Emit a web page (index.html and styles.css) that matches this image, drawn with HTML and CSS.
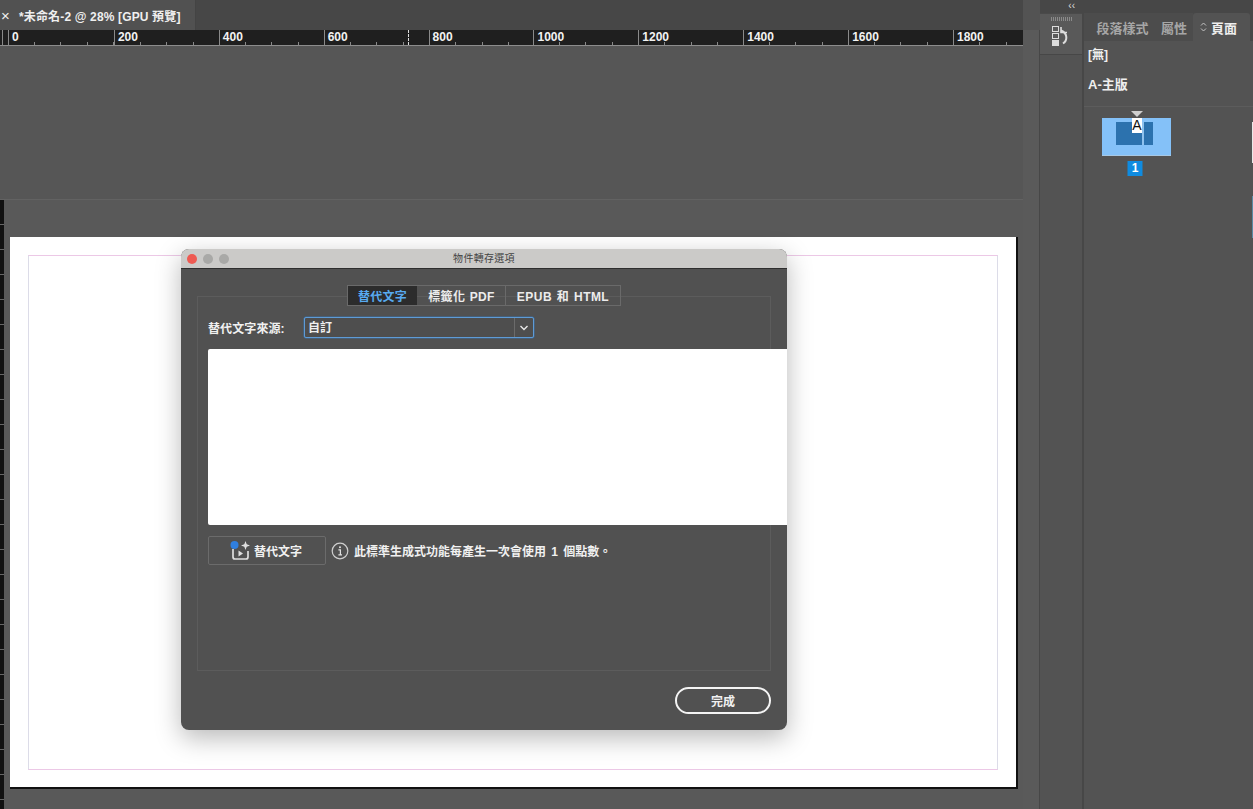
FILE: index.html
```html
<!DOCTYPE html>
<html lang="zh-Hant">
<head>
<meta charset="utf-8">
<title>物件轉存選項</title>
<link rel="stylesheet" href="styles.css">
</head>
<body>
<div class="app">
  <main class="workspace">
    <div class="tabbar">
      <div class="doc-tab"><span class="doc-close">×</span><span class="doc-name">*未命名-2 @ 28% [GPU 預覽]</span></div>
    </div>
    <div class="ruler-row">
      <div class="ruler">
        <span class="ruler-start"></span>
        <span class="cell">0</span><span class="cell">200</span><span class="cell">400</span><span class="cell">600</span><span class="cell">800</span><span class="cell">1000</span><span class="cell">1200</span><span class="cell">1400</span><span class="cell">1600</span><span class="cell last">1800</span>
      </div>
      <span class="ruler-cursor"></span>
    </div>
    <div class="canvas">
      <div class="pasteboard-top"></div>
      <div class="spread">
        <div class="v-ruler"></div>
        <div class="page-area">
          <div class="page"><div class="guide"></div></div>
        </div>
      </div>
      <section class="dialog">
        <header class="titlebar">
          <span class="light red"></span><span class="light"></span><span class="light"></span>
          <span class="title">物件轉存選項</span>
        </header>
        <div class="dialog-body">
          <div class="group">
            <div class="tabs">
              <span class="tab active">替代文字</span><span class="tab t2">標籤化 PDF</span><span class="tab t3">EPUB 和 HTML</span>
            </div>
            <div class="source-row">
              <label class="source-label">替代文字來源:</label>
              <div class="select"><span class="select-value">自訂</span><span class="select-arrow"><svg width="10" height="6" viewBox="0 0 10 6"><path d="M1.5 1l3.5 3.5L8.5 1" fill="none" stroke="#e8e8e8" stroke-width="1.4"/></svg></span></div>
            </div>
            <div class="textbox"></div>
            <div class="gen-row">
              <button class="gen-btn">
                <svg class="gen-icon" width="22" height="22" viewBox="0 0 22 22"><path d="M3 9v8a2 2 0 0 0 2 2h11a2 2 0 0 0 2-2V11" fill="none" stroke="#dedede" stroke-width="1.7"/><path d="M8.5 10.5l4.5 3-4.5 3z" fill="#dedede"/><path d="M15.5 1l1.2 3.3L20 5.5l-3.3 1.2L15.5 10l-1.2-3.3L11 5.5l3.3-1.2z" fill="#dedede"/><circle cx="4.5" cy="5" r="4" fill="#2f7fe0"/></svg>
                <span>替代文字</span>
              </button>
              <svg class="info" width="18" height="18" viewBox="0 0 18 18"><circle cx="9" cy="9" r="7.8" fill="none" stroke="#cfcfcf" stroke-width="1.2"/><circle cx="9" cy="5.3" r="1" fill="#e0e0e0"/><path d="M7.4 7.8H9.4V12.6M7.4 12.8H11" fill="none" stroke="#e0e0e0" stroke-width="1.2"/></svg>
              <span class="gen-note">此標準生成式功能每產生一次會使用 1 個點數。</span>
            </div>
          </div>
          <div class="actions"><button class="done">完成</button></div>
        </div>
      </section>
    </div>
  </main>
  <div class="scroll-strip"></div>
  <aside class="dock">
    <div class="collapse">‹‹</div>
    <div class="dock-tool">
      <div class="grip"></div>
      <svg width="18" height="20" viewBox="0 0 18 20"><rect x="0.5" y="0.5" width="6" height="5" fill="none" stroke="#dcdcdc"/><rect x="0.5" y="7.5" width="6" height="5" fill="none" stroke="#dcdcdc"/><rect x="0" y="14" width="7" height="6" fill="#dcdcdc"/><path d="M11 17.5c4.5-3 5-10-2-13" fill="none" stroke="#dcdcdc" stroke-width="2"/><path d="M9 1v5.5h6" fill="none" stroke="#dcdcdc" stroke-width="1.6"/></svg>
    </div>
  </aside>
  <aside class="panel">
    <div class="panel-tabs">
      <span class="ptab">段落樣式</span><span class="ptab">屬性</span><span class="ptab current"><svg class="updown" width="7" height="10" viewBox="0 0 7 10"><path d="M1 3.5L3.5 1 6 3.5M1 6.5L3.5 9 6 6.5" fill="none" stroke="#c4c4c4"/></svg>頁面</span>
    </div>
    <div class="master-list">
      <div class="master">[無]</div>
      <div class="master second">A-主版</div>
    </div>
    <div class="pages">
      <div class="marker"></div>
      <div class="thumb"><div class="thumb-inner"><span class="thumb-a">A</span><span class="thumb-stripe"></span></div></div>
      <div class="page-no">1</div>
    </div>
    <div class="edge-mark"></div>
    <div class="edge-mark blue"></div>
  </aside>
</div>
</body>
</html>
```
FILE: styles.css
```css
* { box-sizing: border-box; }
html, body { margin: 0; height: 100%; }
body {
  width: 1253px; height: 809px; overflow: hidden; background: #535353; color: #f0f0f0;
  font-family: "Liberation Sans", "Noto Sans CJK TC", sans-serif;
}
.app { display: flex; width: 1253px; height: 809px; }

.workspace { width: 1023px; display: flex; flex-direction: column; position: relative; flex: none; }
.tabbar { height: 30px; background: #474747; flex: none; }
.doc-tab { width: 196px; height: 30px; background: #515151; display: flex; align-items: center; border-right: 1px solid #444; font-size: 12px; font-weight: 700; color: #efefef; }
.doc-close { width: 19px; padding-left: 1px; font-size: 15px; font-weight: 400; }
.doc-name { white-space: nowrap; letter-spacing: 0.15px; }

.ruler-row { height: 16px; flex: none; position: relative; }
.ruler {
  height: 16px; display: flex; background-color: #1f1f1f; border-bottom: 1px solid #8d8d8d;
}
.ruler-start { width: 9px; border-right: 1px solid #8a8a8a; flex: none; background: linear-gradient(90deg, transparent 2px, #8a8a8a 2px 3px, transparent 3px); }
.cell {
  width: 104.9px; flex: none; padding: 1px 0 0 3px; font-size: 12px; line-height: 13px; font-weight: 700; color: #f2f2f2;
  border-left: 1px solid #8a8a8a;
  background-image: repeating-linear-gradient(90deg, transparent 0 25.25px, #8a8a8a 25.25px 26.25px);
  background-size: 100% 3px; background-position: 0 100%; background-repeat: no-repeat;
}
.ruler-start + .cell { border-left: 0; }
.cell.last { width: 69px; }
.ruler-cursor { position: absolute; left: 408px; top: 0; height: 15px; border-left: 1px dashed #ddd; }

.canvas { flex: 1; position: relative; background: #575757; display: flex; flex-direction: column; }
.pasteboard-top { height: 154px; flex: none; background: #565656; border-bottom: 1px solid #626262; }
.spread { flex: 1; display: flex; background: #595959; }
.v-ruler {
  width: 4px; flex: none; margin-right: 6px;
  background: repeating-linear-gradient(180deg, #111 0 24px, #666 24px 25px);
}
.page-area { padding-top: 37px; }
.page {
  width: 1008px; height: 552px; background: #fff; padding: 18px 18px 17px 18px;
  border-right: 2px solid #111; border-bottom: 2px solid #111;
}
.guide { width: 970px; height: 515px; border: 1px solid #ecc8e6; border-left-color: #dcdce8; border-right-color: #dcdce8; }

.dialog {
  position: absolute; left: 181px; top: 203px; width: 606px; height: 481px; background: #515151;
  border-radius: 8px; overflow: hidden; box-shadow: 0 8px 26px rgba(0,0,0,.28); display: flex; flex-direction: column;
}
.titlebar { height: 20px; flex: none; background: #cbcac8; border-bottom: 1px solid #2e2e2e; display: flex; align-items: center; padding-left: 6px; gap: 6px; position: relative; }
.light { width: 10px; height: 10px; border-radius: 50%; background: #a9a9a7; }
.light.red { background: #ee5a52; }
.title { position: absolute; left: 0; right: 0; text-align: center; color: #444; font-size: 10px; line-height: 20px; letter-spacing: .3px; }
.dialog-body { flex: 1; padding: 27px 16px 0 16px; display: flex; flex-direction: column; }
.group { height: 375px; border: 1px solid #5c5c5c; padding: 0 0 0 10px; position: relative; overflow: visible; }
.tabs { position: absolute; top: -12px; left: 149px; display: flex; height: 21px; border: 1px solid #6a6a6a; font-size: 12px; font-weight: 700; }
.tab { display: flex; align-items: center; justify-content: center; color: #ececec; letter-spacing: .3px; width: 69px; white-space: nowrap; }
.tab.active { background: #2c2c2c; color: #58aaf0; }
.tab.t2 { width: 89px; border-right: 1px solid #6a6a6a; word-spacing: 1px; padding-left: 1px; }
.tab.t3 { width: 114px; letter-spacing: .45px; word-spacing: 1px; }
.source-row { display: flex; align-items: center; padding-top: 20px; height: 41px; }
.source-label { width: 96px; flex: none; font-size: 12px; font-weight: 700; white-space: nowrap; letter-spacing: .1px; }
.select { width: 230px; height: 21px; border: 1px solid #5e9bd6; border-radius: 2px; display: flex; background: #4e4e4e; font-size: 12px; font-weight: 700; box-shadow: 0 0 0 .5px #3d6f9f; }
.select-value { flex: 1; line-height: 20px; padding-left: 3px; }
.select-arrow { width: 19px; border-left: 1px solid #6b6b6b; display: flex; align-items: center; justify-content: center; }
.textbox { width: 590px; height: 176px; background: #fff; margin-top: 11px; border-radius: 2px 0 0 2px; }
.gen-row { display: flex; align-items: center; margin-top: 11px; height: 29px; }
.gen-btn { width: 118px; height: 29px; background: transparent; border: 1px solid #6b6b6b; border-radius: 2px; color: #f0f0f0; font: 700 12px "Liberation Sans", "Noto Sans CJK TC", sans-serif; display: flex; align-items: center; padding: 0 0 0 21px; gap: 2px; }
.gen-icon { flex: none; }
.info { margin-left: 5px; flex: none; }
.gen-note { margin-left: 5px; font-size: 12px; font-weight: 700; white-space: nowrap; word-spacing: 2px; }
.actions { display: flex; justify-content: flex-end; padding-top: 16px; }
.done { width: 96px; height: 27px; border: 2px solid #f4f4f4; border-radius: 14px; background: transparent; color: #f0f0f0; font: 700 12px "Liberation Sans", "Noto Sans CJK TC", sans-serif; padding: 0; }

.scroll-strip { width: 17px; flex: none; background: #5a5a5a; margin-top: 30px; border-right: 1px solid #474747; }
.dock { width: 44px; flex: none; background: #535353; border-right: 2px solid #474747; display: flex; flex-direction: column; }
.collapse { height: 13px; background: #474747; font-size: 10px; line-height: 11px; text-align: right; padding-right: 7px; color: #ddd; }
.dock-tool { height: 42px; background: #595959; border-top: 1px solid #4a4a4a; border-bottom: 1px solid #474747; display: flex; flex-direction: column; align-items: center; padding-top: 3px; gap: 5px; }
.grip { width: 21px; height: 4px; background: repeating-linear-gradient(90deg, #8a8a8a 0 1px, transparent 1px 2px); }

.panel { flex: 1; background: #535353; position: relative; min-width: 0; }
.panel-tabs { height: 41px; background: #474747; display: flex; padding-top: 13px; font-size: 13px; font-weight: 700; }
.ptab { display: flex; align-items: center; justify-content: center; color: #a6a6a6; white-space: nowrap; background: #4c4c4c; }
.ptab:nth-child(1) { width: 70px; padding-left: 7px; }
.ptab:nth-child(2) { width: 39px; justify-content: flex-start; padding-left: 7px; }
.ptab.current { width: 57px; background: #535353; color: #eee; border-radius: 3px 3px 0 0; justify-content: flex-start; padding-left: 7px; }
.updown { flex: none; margin-right: 4px; }
.master-list { height: 66px; border-bottom: 1px solid #5c5c5c; padding: 6px 0 0 4px; font-size: 12px; font-weight: 700; color: #efefef; }
.master { line-height: 16px; }
.master.second { margin-top: 14px; font-size: 13px; }
.pages { width: 69px; margin-left: 18px; display: flex; flex-direction: column; align-items: center; padding-top: 4px; }
.marker { width: 0; height: 0; border-left: 6px solid transparent; border-right: 6px solid transparent; border-top: 6px solid #cfcfcf; }
.thumb { width: 69px; height: 38px; background: #84c1f8; margin-top: 1px; padding: 4px 10px 0 14px; border-bottom: 1px solid #a7c8e4; }
.thumb-inner { width: 37px; height: 23px; background: #2c72ae; position: relative; }
.thumb-a { position: absolute; left: 16px; top: -4px; width: 10px; height: 15px; background: #fff; color: #111; font-size: 14px; line-height: 15px; text-align: center; }
.thumb-stripe { position: absolute; left: 26px; top: 0; width: 2px; height: 23px; background: #8fc2ee; }
.page-no { width: 15px; height: 15px; background: #0f8be0; color: #fff; font-size: 12px; line-height: 15px; text-align: center; font-weight: 700; margin-top: 5px; transform: translateX(-1.5px); }
.edge-mark { position: absolute; right: 0; top: 122px; width: 1px; height: 41px; background: #e8e8e8; }
.edge-mark.blue { top: 196px; height: 42px; background: #5a8aa4; }
```
